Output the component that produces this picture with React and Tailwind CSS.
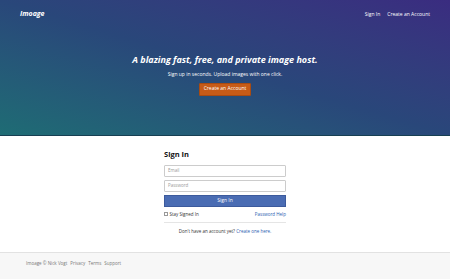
export default function App() {
  return (
    <div className="min-h-[279px] bg-white flex flex-col font-['Open_Sans',sans-serif]">
      <div className="h-[136px] bg-linear-to-tr from-[#1e6c74] via-[#29477a] to-[#3a2c80] border-b border-[#173f52] flex flex-col">
        <div className="flex items-center justify-between px-[20px] pt-[9px]">
          <span className="text-white text-[7px] font-bold italic">Imoage</span>
          <div className="flex gap-[7px] text-white text-[5px]">
            <span>Sign In</span>
            <span>Create an Account</span>
          </div>
        </div>
        <div className="flex flex-col items-center mt-[35px]">
          <h1 className="text-white text-[9px] font-bold italic leading-none">
            A blazing fast, free, and private image host.
          </h1>
          <p className="text-white text-[5px] mt-[8px] leading-none">
            Sign up in seconds. Upload images with one click.
          </p>
          <button className="mt-[6px] bg-[#c75b17] text-white text-[5px] h-[13px] px-[4px] rounded-[1px] border border-[#a94b12]">
            Create an Account
          </button>
        </div>
      </div>
      <div className="flex justify-center pt-[15px] h-[116px]">
        <div className="w-[122px] flex flex-col">
          <h2 className="text-[7.5px] font-bold text-[#111] leading-none">Sign In</h2>
          <div className="mt-[6px] h-[12px] border border-[#ccc] rounded-[1px] flex items-center px-[3px] text-[4.5px] text-[#999]">Email</div>
          <div className="mt-[3px] h-[12px] border border-[#ccc] rounded-[1px] flex items-center px-[3px] text-[4.5px] text-[#999]">Password</div>
          <button className="mt-[3px] h-[12px] bg-[#4a6cb3] border border-[#3c5a9c] text-white text-[5px]">Sign In</button>
          <div className="mt-[4px] flex items-center justify-between text-[4.5px]">
            <div className="flex items-center gap-[2px] text-[#333]">
              <span className="w-[3.5px] h-[3.5px] border border-[#999]"></span>
              <span>Stay Signed In</span>
            </div>
            <span className="text-[#2a5db0]">Password Help</span>
          </div>
          <div className="mt-[5px] border-t border-[#e5e5e5]"></div>
          <p className="mt-[5px] text-center text-[4.5px] text-[#333]">
            Don't have an account yet? <span className="text-[#2a5db0]">Create one here.</span>
          </p>
        </div>
      </div>
      <div className="flex-1 bg-[#f7f7f7] border-t border-[#e2e2e2] px-[26px] pt-[7px] flex gap-[3px] text-[4.5px] text-[#777]">
        <span>Imoage © Nick Vogt</span>
        <span>Privacy</span>
        <span>Terms</span>
        <span>Support</span>
      </div>
    </div>
  );
}
